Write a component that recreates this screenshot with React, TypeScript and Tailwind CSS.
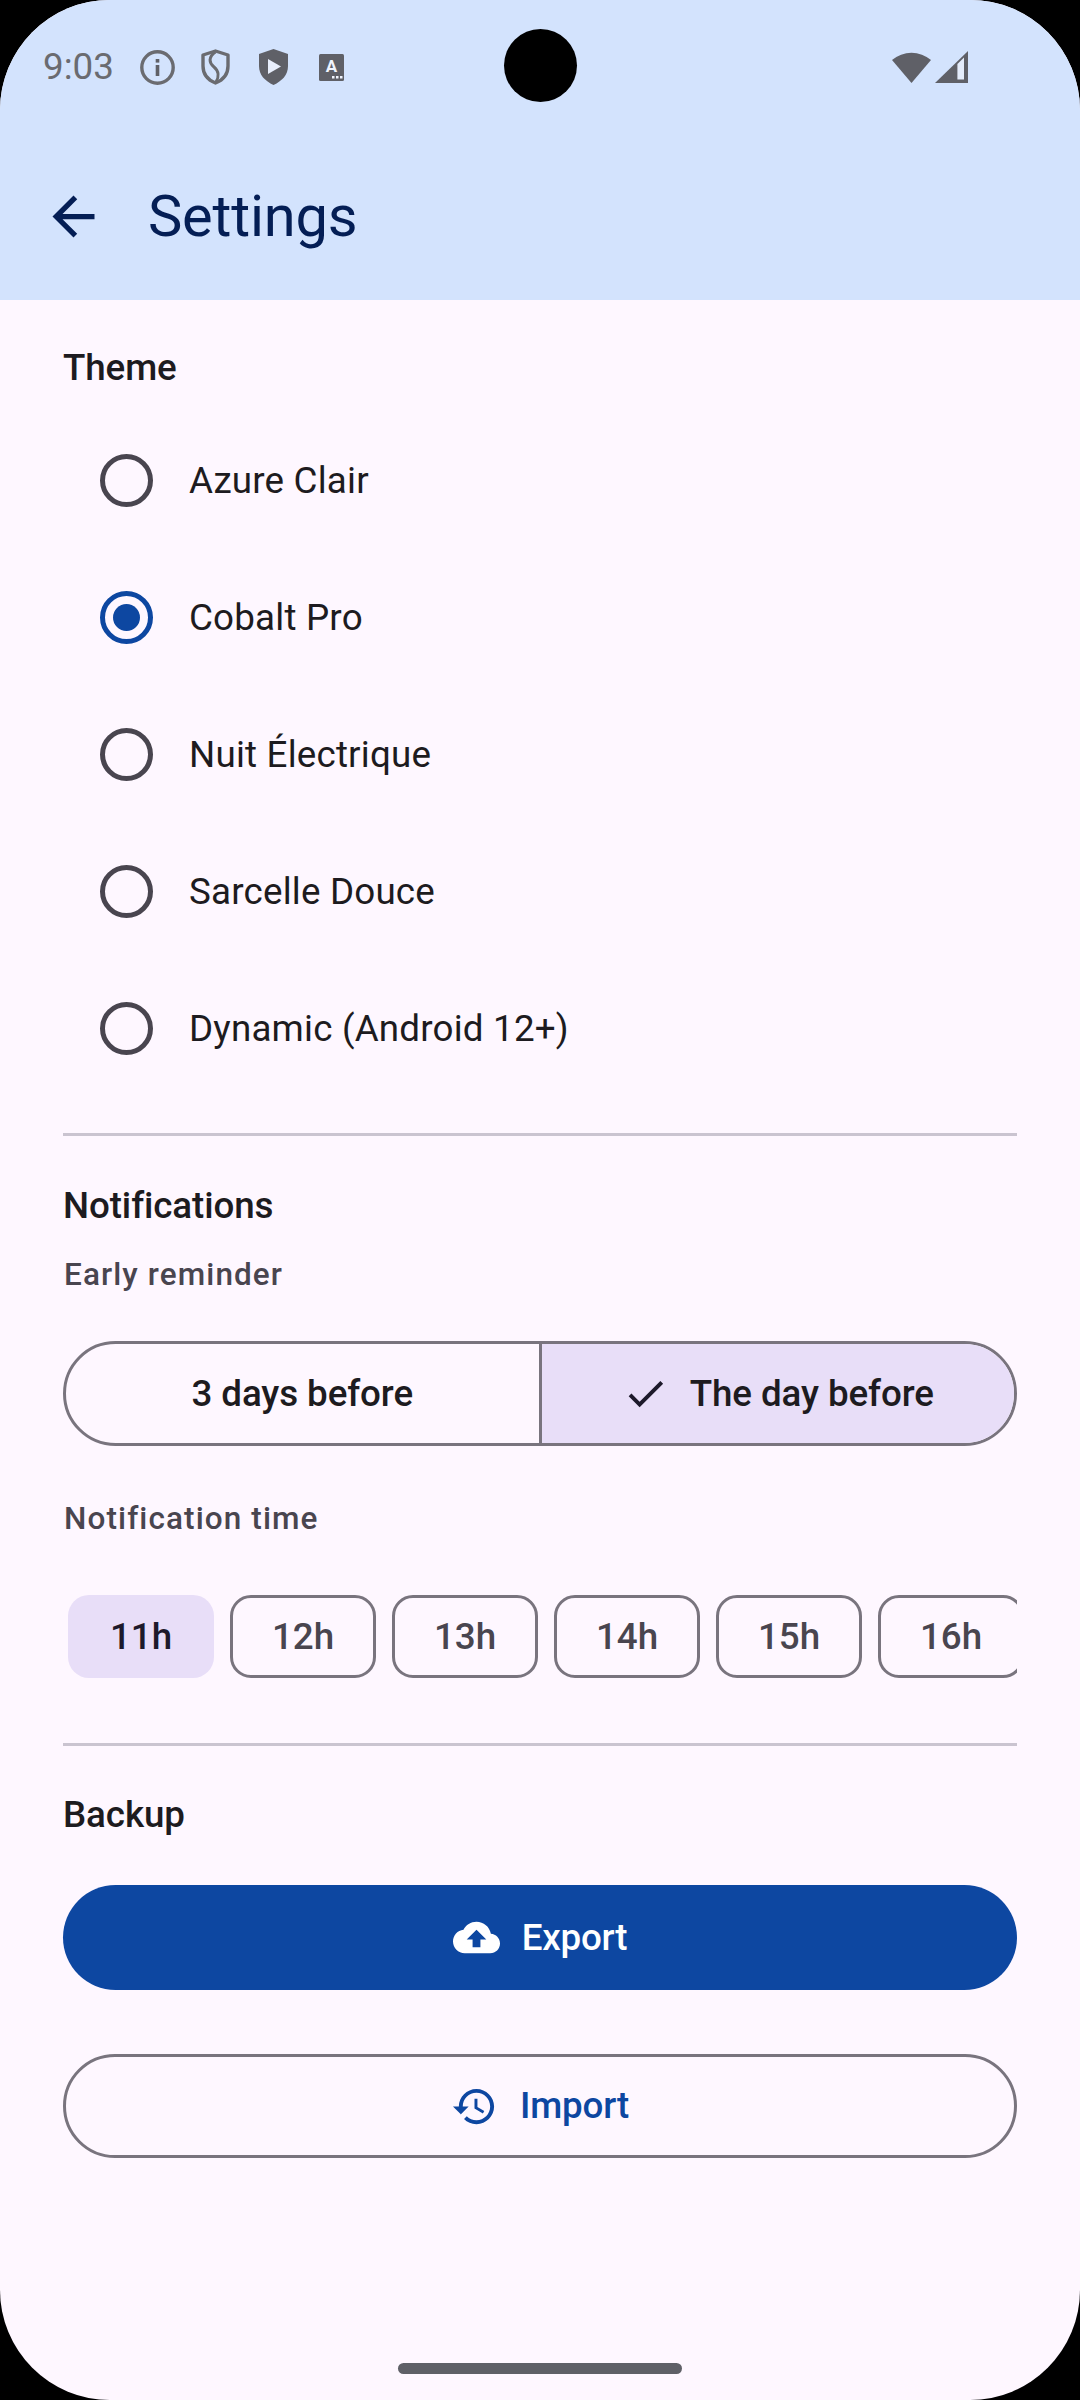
import { ReactNode } from 'react';

const themes = ['Azure Clair', 'Cobalt Pro', 'Nuit Électrique', 'Sarcelle Douce', 'Dynamic (Android 12+)'];
const hours = ['11h', '12h', '13h', '14h', '15h', '16h'];

function SectionTitle({ children, className }: { children: ReactNode; className: string }) {
  return <h2 className={`text-[36.75px] leading-[60px] font-medium tracking-[-0.1px] text-[#1D1B20] ${className}`}>{children}</h2>;
}

function SubLabel({ children, className }: { children: ReactNode; className: string }) {
  return <p className={`ml-[1px] text-[31.5px] leading-[40px] font-medium tracking-[1.1px] text-[#49454F] ${className}`}>{children}</p>;
}

function Divider({ className }: { className: string }) {
  return <div className={`h-[3px] bg-[#CAC4D0] ${className}`} />;
}

function ThemeRow({ label, selected }: { label: string; selected: boolean }) {
  return (
    <div className="flex h-[137px] items-center pl-[37px]">
      <div
        className={`flex h-[53px] w-[53px] items-center justify-center rounded-full border-[5px] ${
          selected ? 'border-[#0D47A1]' : 'border-[#49454F]'
        }`}
      >
        {selected && <div className="h-[27px] w-[27px] rounded-full bg-[#0D47A1]" />}
      </div>
      <span className="ml-[36px] text-[36.75px] tracking-[0.2px] text-[#1D1B20]">{label}</span>
    </div>
  );
}

function StatusIcons() {
  return (
    <div className="ml-[26px] flex items-center">
      {/* info */}
      <svg width="35" height="35" viewBox="0 0 35 35" fill="none">
        <circle cx="17.5" cy="17.5" r="15.7" stroke="#6A6B70" strokeWidth="3.4" />
        <rect x="15.7" y="15" width="3.6" height="11" fill="#5F6067" />
        <rect x="15.7" y="9" width="3.6" height="3.6" fill="#5F6067" />
      </svg>
      {/* shield with curve */}
      <svg className="ml-[26px]" width="29" height="36" viewBox="0 0 29 36" fill="none">
        <path
          d="M14.5 2 L27 6 V17 C27 25 22 31 14.5 34 C7 31 2 25 2 17 V6 Z"
          stroke="#6A6B70"
          strokeWidth="3.4"
          strokeLinejoin="round"
        />
        <path d="M14.5 3 C7 8 8 14 13 18 C18 22 18 28 15 33" stroke="#6A6B70" strokeWidth="3" />
      </svg>
      {/* play shield */}
      <svg className="ml-[29px]" width="29" height="36" viewBox="0 0 29 36">
        <path
          d="M14.5 0 L29 5 V17 C29 26 23 32 14.5 36 C6 32 0 26 0 17 V5 Z"
          fill="#5F6067"
        />
        <path d="M9 10 L22 17.5 L9 25 Z" fill="#E8EEFC" />
      </svg>
      {/* keyboard A */}
      <svg className="ml-[31px]" width="25" height="27" viewBox="0 0 25 27">
        <rect width="25" height="27" rx="1.5" fill="#5F6067" />
        <text x="12.5" y="18" textAnchor="middle" fontSize="17" fontWeight="700" fontFamily="Roboto" fill="#F0F4FD">
          A
        </text>
        <rect x="13" y="22" width="2.5" height="2.5" fill="#F0F4FD" />
        <rect x="17" y="22" width="2.5" height="2.5" fill="#F0F4FD" />
        <rect x="21" y="22" width="2.5" height="2.5" fill="#F0F4FD" />
      </svg>
    </div>
  );
}

export default function App() {
  return (
    <div className="h-[2400px] w-[1080px] bg-black" style={{ fontFamily: 'Roboto, sans-serif' }}>
      <div className="relative flex h-full flex-col overflow-hidden rounded-[110px] bg-[#FEF7FF]">
        {/* camera cutout */}
        <div className="absolute left-[504px] top-[29px] h-[73px] w-[73px] rounded-full bg-black" />

        <header className="h-[300px] bg-[#D3E3FD]">
          <div className="flex h-[134px] items-center pl-[43px] pr-[112px]">
            <span className="text-[36.75px] text-[#6A6B70]">9:03</span>
            <StatusIcons />
            <div className="ml-auto flex items-center gap-[4px]">
              <svg width="39" height="32" viewBox="0 0 39 32">
                <path d="M19.5 32 L0 9 A30 30 0 0 1 39 9 Z" fill="#5F6067" />
              </svg>
              <svg width="33" height="32" viewBox="0 0 33 32">
                <path d="M0 32 L33 0 V32 Z" fill="#5F6067" />
                <path d="M22.4 13 L29 6.5 V28.5 H22.4 Z" fill="#E4ECFB" />
              </svg>
            </div>
          </div>
          <div className="flex h-[164px] items-center pl-[42px]">
            <svg width="63" height="63" viewBox="0 0 24 24" fill="#041E55">
              <path d="M20 11H7.83l5.59-5.59L12 4l-8 8 8 8 1.41-1.41L7.83 13H20v-2z" />
            </svg>
            <h1 className="ml-[43px] text-[57.75px] tracking-[-0.2px] text-[#041E55]">Settings</h1>
          </div>
        </header>

        <main className="flex flex-1 flex-col px-[63px] pt-[38px]">
          <SectionTitle className="">Theme</SectionTitle>
          <div className="mt-[14px]">
            {themes.map((t) => (
              <ThemeRow key={t} label={t} selected={t === 'Cobalt Pro'} />
            ))}
          </div>

          <Divider className="mt-[36px]" />

          <SectionTitle className="mt-[40px]">Notifications</SectionTitle>
          <SubLabel className="mt-[19px]">Early reminder</SubLabel>

          <div className="mt-[46px] flex h-[105px] overflow-hidden rounded-full border-[3px] border-[#79747E] text-[36.75px] font-medium tracking-[-0.1px] text-[#1D1B20]">
            <div className="flex flex-1 items-center justify-center border-r-[3px] border-[#79747E]">3 days before</div>
            <div className="flex flex-1 items-center justify-center gap-[21px] bg-[#E8DEF8]">
              <svg width="47" height="47" viewBox="0 0 24 24" fill="#1D192B">
                <path d="M9 16.17L4.83 12l-1.42 1.41L9 19 21 7l-1.41-1.41z" />
              </svg>
              The day before
            </div>
          </div>

          <SubLabel className="mt-[53px]">Notification time</SubLabel>

          <div className="mt-[56px] flex gap-[16px] overflow-hidden pl-[5px] text-[36.75px] font-medium">
            {hours.map((h, i) => (
              <div
                key={h}
                className={
                  i === 0
                    ? 'flex h-[83px] w-[146px] shrink-0 items-center justify-center rounded-[21px] bg-[#E8DEF8] text-[#1D192B]'
                    : 'flex h-[83px] w-[146px] shrink-0 items-center justify-center rounded-[21px] border-[3px] border-[#79747E] text-[#49454F]'
                }
              >
                {h}
              </div>
            ))}
          </div>

          <Divider className="mt-[65px]" />

          <SectionTitle className="mt-[39px]">Backup</SectionTitle>

          <button className="mt-[40px] flex h-[105px] items-center justify-center gap-[22px] rounded-full bg-[#0D47A1] text-[36.75px] font-medium tracking-[-0.2px] text-white">
            <svg width="47" height="47" viewBox="0 0 24 24" fill="#FFFFFF">
              <path d="M19.35 10.04C18.67 6.59 15.64 4 12 4 9.11 4 6.6 5.64 5.35 8.04 2.34 8.36 0 10.91 0 14c0 3.31 2.69 6 6 6h13c2.76 0 5-2.24 5-5 0-2.64-2.05-4.78-4.65-4.96zM14 13v4h-4v-4H7l5-5 5 5h-3z" />
            </svg>
            Export
          </button>

          <button className="mt-[64px] flex h-[104px] items-center justify-center gap-[22px] rounded-full border-[3px] border-[#79747E] text-[36.75px] font-medium tracking-[-0.2px] text-[#0D47A1]">
            <svg width="47" height="47" viewBox="0 0 24 24" fill="#0D47A1">
              <path d="M13 3c-4.97 0-9 4.03-9 9H1l3.89 3.89.07.14L9 12H6c0-3.87 3.13-7 7-7s7 3.13 7 7-3.13 7-7 7c-1.93 0-3.68-.79-4.94-2.06l-1.42 1.42C8.27 19.99 10.51 21 13 21c4.97 0 9-4.03 9-9s-4.03-9-9-9zm-1 5v5l4.28 2.54.72-1.21-3.5-2.08V8H12z" />
            </svg>
            Import
          </button>

          <div className="mx-auto mt-auto mb-[26px] h-[11px] w-[284px] rounded-full bg-[#5F6067]" />
        </main>
      </div>
    </div>
  );
}
